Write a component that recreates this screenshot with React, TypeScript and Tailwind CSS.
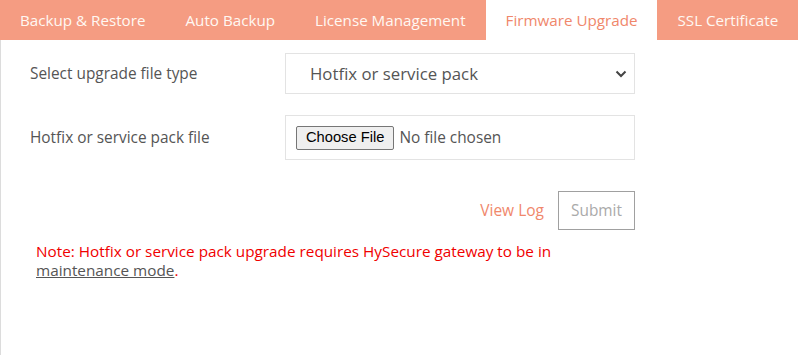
import React from "react";

const tabs = ["Backup & Restore", "Auto Backup", "License Management", "Firmware Upgrade", "SSL Certificate"];

export default function App() {
  return (
    <div className="w-[801px] h-[355px] bg-white font-['Open_Sans',sans-serif] overflow-hidden">
      <div className="flex h-[40px] w-fit">
        {tabs.map((t) => (
          <div
            key={t}
            className={
              t === "Firmware Upgrade"
                ? "shrink-0 whitespace-nowrap flex items-center px-5 bg-white text-[#f0876b] text-[15.2px]"
                : "shrink-0 whitespace-nowrap flex items-center px-5 bg-[#f59c82] text-[#fff8f2] text-[15.2px]"
            }
          >
            {t}
          </div>
        ))}
      </div>
      <div className="border-l border-[#dcdcdc] h-[315px] pl-[29px] pt-[13px]">
        <div className="flex items-center h-[41px]">
          <div className="w-[255px] text-[15.4px] text-[#555]">Select upgrade file type</div>
          <div className="w-[350px] h-[41px] border border-[#e3e3e3] flex items-center justify-between pl-[24px] pr-[7px] text-[16.8px] text-[#555]">
            <span>Hotfix or service pack</span>
            <svg width="12" height="8" viewBox="0 0 12 8" fill="none">
              <path d="M1.5 1.5 L6 6 L10.5 1.5" stroke="#444" strokeWidth="2" />
            </svg>
          </div>
        </div>
        <div className="mt-[21px] flex items-center h-[45px]">
          <div className="w-[255px] text-[15.4px] text-[#555]">Hotfix or service pack file</div>
          <div className="w-[350px] h-[45px] border border-[#e3e3e3] flex items-center pl-[10px]">
            <span className="h-[24px] px-[9px] flex items-center border border-[#767676] rounded-[2px] bg-[#efefef] text-[14.7px] text-black font-['Liberation_Sans',sans-serif]">
              Choose File
            </span>
            <span className="ml-[5px] text-[15.4px] text-[#555]">No file chosen</span>
          </div>
        </div>
        <div className="mt-[31px] flex justify-end items-center w-[605px]">
          <span className="text-[15.5px] text-[#f0876b] mr-[14px]">View Log</span>
          <div className="w-[77px] h-[39px] border border-[#a0a0a0] flex items-center justify-center text-[15.4px] text-[#aaa]">
            Submit
          </div>
        </div>
        <div className="mt-[12px] pl-[6px] w-[580px] text-[15.3px] leading-[19px] text-[#f00000]">
          Note: Hotfix or service pack upgrade requires HySecure gateway to be in{" "}
          <span className="underline text-[#555]">maintenance mode</span>.
        </div>
      </div>
    </div>
  );
}
